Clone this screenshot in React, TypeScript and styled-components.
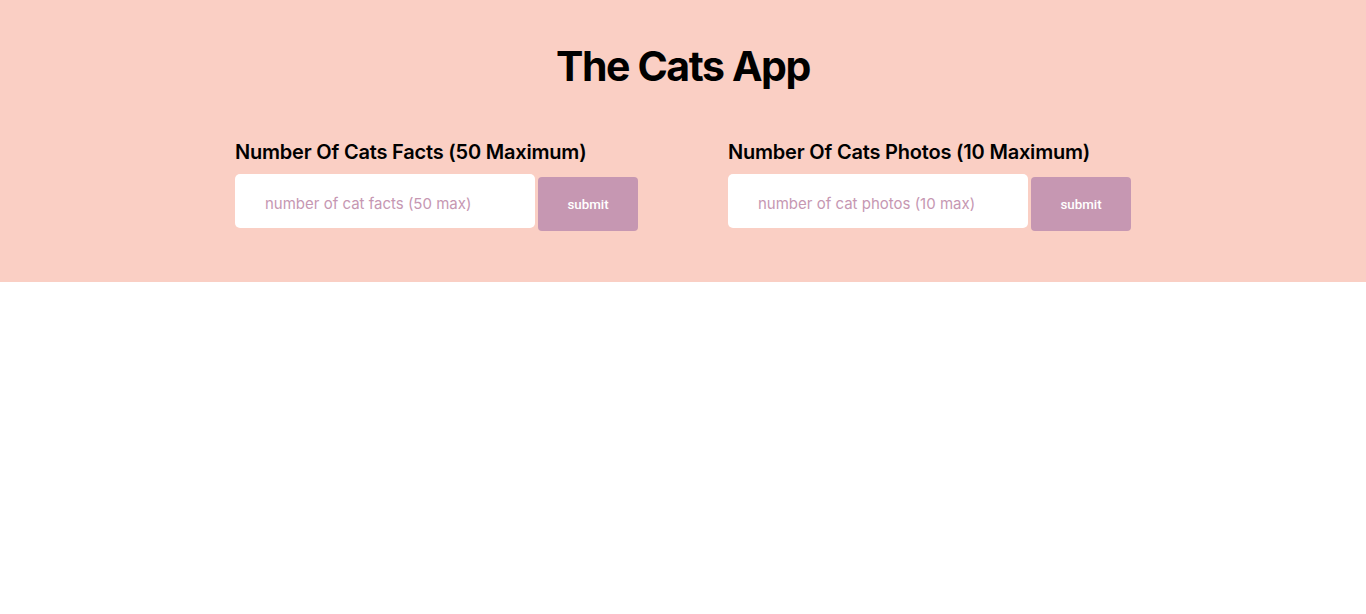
import React from 'react';
import styled, { createGlobalStyle } from 'styled-components';

const GlobalStyle = createGlobalStyle`
  body {
    margin: 0;
    font-family: Inter, "Noto Sans", sans-serif;
    background: #ffffff;
  }
`;

const Header = styled.header`
  background-color: #facfc4;
  height: 282px;
  box-sizing: border-box;
  padding-top: 41px;
`;

const Title = styled.h1`
  margin: 0;
  text-align: center;
  font-size: 41px;
  font-weight: 700;
  line-height: 50px;
  letter-spacing: -1.4px;
  color: #000;
`;

const Forms = styled.div`
  display: flex;
  justify-content: center;
  gap: 90px;
  margin-top: 49px;
`;

const FormBlock = styled.form`
  display: flex;
  flex-direction: column;
`;

const Label = styled.label`
  font-size: 20px;
  font-weight: 600;
  line-height: 24px;
  letter-spacing: -0.2px;
  color: #000;
  margin-bottom: 10px;
`;

const Row = styled.div`
  display: flex;
  align-items: flex-start;
`;

const Input = styled.input`
  width: 300px;
  height: 54px;
  box-sizing: border-box;
  border: none;
  border-radius: 5px;
  padding: 5px 30px 0;
  font-family: Inter, sans-serif;
  font-size: 15px;
  background: #fff;
  outline: none;

  &::placeholder {
    color: #c697b2;
  }
`;

const Submit = styled.button`
  width: 100px;
  height: 54px;
  margin: 3px 0 0 3px;
  border: none;
  border-radius: 4px;
  background-color: #c697b2;
  color: #fff;
  font-family: Roboto, Arial, sans-serif;
  font-size: 13.333px;
  font-weight: 500;
  cursor: pointer;
`;

const CatForm = ({ label, placeholder }: { label: string; placeholder: string }) => (
  <FormBlock onSubmit={(e) => e.preventDefault()}>
    <Label>{label}</Label>
    <Row>
      <Input type="number" placeholder={placeholder} />
      <Submit type="submit">submit</Submit>
    </Row>
  </FormBlock>
);

const App = () => {
  return (
    <>
      <GlobalStyle />
      <Header>
        <Title>The Cats App</Title>
        <Forms>
          <CatForm label="Number Of Cats Facts (50 Maximum)" placeholder="number of cat facts (50 max)" />
          <CatForm label="Number Of Cats Photos (10 Maximum)" placeholder="number of cat photos (10 max)" />
        </Forms>
      </Header>
    </>
  );
};

export default App;
